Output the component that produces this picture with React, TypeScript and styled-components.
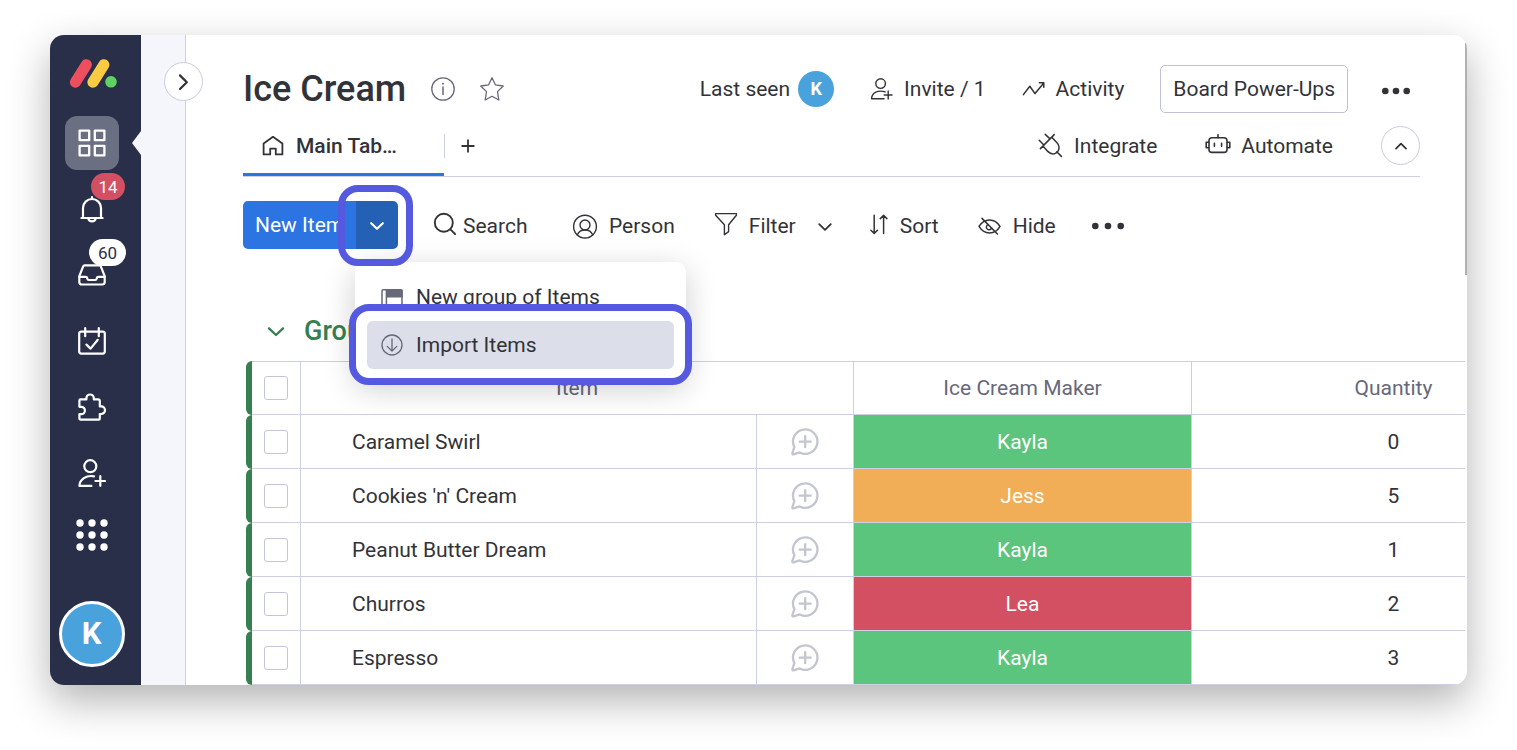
import React from "react";
import styled, { createGlobalStyle, css } from "styled-components";

const color = {
  text: "#323338",
  muted: "#676879",
  line: "#cdd0e1",
  outline: "#c3c6d9",
  navy: "#292f49",
  rail: "#f5f6fb",
  blue: "#2b74e2",
  blueDark: "#2461b4",
  highlight: "#5559df",
  selected: "#dcdee9",
  groupGreen: "#367f50",
  avatar: "#4aa2dd",
  red: "#d25061",
  green: "#5bc47d",
  orange: "#f1ae56",
};

const GlobalStyle = createGlobalStyle`
  * { box-sizing: border-box; }
  body {
    margin: 0;
    background: #fff;
    color: ${color.text};
    font-family: Roboto, "Liberation Sans", sans-serif;
    font-size: 21px;
    line-height: 28px;
  }
  button, input { font: inherit; color: inherit; }
  button { padding: 0; border: 0; background: none; cursor: pointer; }
  svg { display: block; flex: none; }
`;

const Page = styled.div`
  padding: 35px 50px 65px;
`;

const Window = styled.div`
  position: relative;
  display: flex;
  overflow: hidden;
  border-radius: 14px;
  background: #fff;
  box-shadow: 0 16px 42px rgba(0, 0, 0, 0.3);
`;

const ScrollThumb = styled.span`
  position: absolute;
  top: 8px;
  right: 0;
  width: 2px;
  height: 232px;
  background: #b1b1b3;
`;

/* Side navigation */

const Sidebar = styled.nav`
  flex: none;
  display: flex;
  flex-direction: column;
  align-items: center;
  width: 91px;
  padding: 24px 8px 18px 0;
  background: ${color.navy};
  color: #fff;
`;

const LogoLink = styled.a`
  display: block;
  margin-bottom: 22px;
`;

const NavList = styled.ul`
  width: 100%;
  margin: 0;
  padding: 0;
  list-style: none;
`;

const NavItem = styled.li<{ $active?: boolean; $short?: boolean }>`
  position: relative;
  display: flex;
  align-items: center;
  justify-content: center;
  height: ${(p) => (p.$short ? 58 : 66)}px;
  ${(p) =>
    p.$active &&
    css`
      &::after {
        content: "";
        position: absolute;
        right: -8px;
        width: 9px;
        height: 24px;
        background: ${color.rail};
        clip-path: polygon(100% 0, 0 50%, 100% 100%);
      }
    `}
`;

const NavButton = styled.button<{ $active?: boolean }>`
  display: flex;
  align-items: center;
  justify-content: center;
  width: 54px;
  height: 54px;
  border-radius: 12px;
  background: ${(p) => (p.$active ? "#6b6f82" : "transparent")};
`;

const Badge = styled.span<{ $alert?: boolean }>`
  position: absolute;
  left: ${(p) => (p.$alert ? 41 : 39)}px;
  top: -3px;
  display: flex;
  align-items: center;
  justify-content: center;
  min-width: ${(p) => (p.$alert ? 34 : 37)}px;
  height: 27px;
  border-radius: 14px;
  background: ${(p) => (p.$alert ? color.red : "#fff")};
  color: ${(p) => (p.$alert ? "#fff" : color.navy)};
  font-size: 17px;
  line-height: 24px;
`;

const Avatar = styled.span<{ $size: number }>`
  display: flex;
  align-items: center;
  justify-content: center;
  width: ${(p) => p.$size}px;
  height: ${(p) => p.$size}px;
  border-radius: 50%;
  background: ${color.avatar};
  color: #fff;
  font-size: 18px;
  font-weight: 700;
`;

const ProfileButton = styled.button`
  margin-top: auto;
  ${Avatar} {
    border: 3px solid #fff;
    font-size: 31px;
  }
`;

/* Collapsed workspace rail */

const Rail = styled.aside`
  position: relative;
  flex: none;
  width: 45px;
  border-right: 1px solid ${color.line};
  background: ${color.rail};
`;

const RailToggle = styled.button`
  position: absolute;
  top: 27px;
  left: 23px;
  z-index: 1;
  display: flex;
  align-items: center;
  justify-content: center;
  width: 39px;
  height: 39px;
  border: 1px solid #c9cbe2;
  border-radius: 50%;
  background: #fff;
`;

/* Board */

const Board = styled.main`
  flex: 1;
  min-width: 0;
  padding: 30px 2px 0 57px;
`;

const Header = styled.header`
  margin-right: 45px;
`;

const TitleRow = styled.div`
  display: flex;
  align-items: center;
  justify-content: space-between;
  height: 48px;
`;

const Cluster = styled.div<{ $gap: number; $end?: number }>`
  display: flex;
  align-items: center;
  gap: ${(p) => p.$gap}px;
  padding-right: ${(p) => p.$end ?? 0}px;
  white-space: nowrap;
`;

const Tools = styled(Cluster)`
  padding-top: 2px;
`;

const Title = styled.h1`
  margin: 0;
  font-size: 36px;
  font-weight: 500;
  line-height: 44px;
`;

const IconButton = styled.button`
  display: flex;
  align-items: center;
  justify-content: center;
`;

const OptionsButton = styled(IconButton)`
  padding-top: 4px;
`;

const Action = styled.button<{ $gap?: number; $minWidth?: number }>`
  display: flex;
  align-items: center;
  gap: ${(p) => p.$gap ?? 10}px;
  min-width: ${(p) => p.$minWidth ?? 0}px;
  white-space: nowrap;
`;

const OutlineButton = styled.button`
  height: 48px;
  padding: 0 12px;
  border: 1px solid #bfc2d6;
  border-radius: 5px;
  white-space: nowrap;
`;

const TabRow = styled.div`
  display: flex;
  align-items: center;
  justify-content: space-between;
  height: 62px;
  margin-top: 2px;
  border-bottom: 1px solid ${color.line};
`;

const Tabs = styled.div`
  display: flex;
  align-items: center;
  align-self: stretch;
`;

const Tab = styled.button`
  display: flex;
  align-items: center;
  align-self: stretch;
  gap: 11px;
  width: 201px;
  padding: 3px 0 0 18px;
  border-bottom: 3px solid ${color.blue};
  font-weight: 500;
`;

const AddTab = styled.button`
  display: flex;
  align-items: center;
  justify-content: center;
  width: 47px;
  height: 24px;
  border-left: 1px solid ${color.line};
`;

const RoundButton = styled.button`
  display: flex;
  align-items: center;
  justify-content: center;
  width: 39px;
  height: 39px;
  border: 1px solid #c9cbe2;
  border-radius: 50%;
`;

const Toolbar = styled.div`
  display: flex;
  align-items: center;
  gap: 33px;
  margin-top: 24px;
`;

const SplitButton = styled.div`
  position: relative;
  z-index: 2;
  flex: none;
  display: flex;
  height: 48px;
  color: #fff;
`;

const SplitMain = styled.button`
  width: 113px;
  padding-left: 12px;
  border-radius: 5px 0 0 5px;
  background: ${color.blue};
  text-align: left;
  white-space: nowrap;
`;

const SplitMore = styled.button`
  position: relative;
  z-index: 1;
  display: flex;
  align-items: center;
  justify-content: center;
  width: 42px;
  border-radius: 0 5px 5px 0;
  background: ${color.blueDark};
  &::after {
    content: "";
    position: absolute;
    inset: -16px -15px -17px -18px;
    border: 7px solid ${color.highlight};
    border-radius: 20px;
  }
`;

const Menu = styled.ul`
  position: absolute;
  top: 61px;
  left: 112px;
  width: 331px;
  margin: 0;
  padding: 11px 12px;
  border-radius: 10px;
  background: #fff;
  box-shadow: 0 8px 32px rgba(0, 0, 0, 0.2);
  color: ${color.text};
  list-style: none;
`;

const MenuItem = styled.li<{ $highlighted?: boolean }>`
  position: relative;
  ${(p) =>
    p.$highlighted &&
    css`
      z-index: 1;
      &::before {
        content: "";
        position: absolute;
        z-index: -1;
        inset: -17px -18px -16px;
        border: 7px solid ${color.highlight};
        border-radius: 20px;
        background: #fff;
      }
    `}
`;

const MenuButton = styled.button<{ $selected?: boolean }>`
  display: flex;
  align-items: center;
  gap: 12px;
  width: 100%;
  height: 48px;
  padding-left: 13px;
  border-radius: 6px;
  background: ${(p) => (p.$selected ? color.selected : "transparent")};
`;

/* Group and table */

const GroupHeader = styled.div`
  display: flex;
  align-items: center;
  gap: 16px;
  height: 60px;
  margin-top: 52px;
  padding-left: 21px;
  color: ${color.groupGreen};
`;

const GroupTitle = styled.h2`
  margin: 0;
  font-size: 27px;
  font-weight: 500;
  line-height: 32px;
`;

const TableScroller = styled.div`
  margin-left: 3px;
  overflow: hidden;
`;

const Table = styled.table`
  width: 100%;
  min-width: 1350px;
  table-layout: fixed;
  border-collapse: separate;
  border-spacing: 0;
`;

const Col = styled.col<{ $width?: number }>`
  width: ${(p) => (p.$width ? `${p.$width}px` : "auto")};
`;

const cell = css`
  height: 54px;
  padding: 0;
  border: solid ${color.line};
  border-width: 0 1px 1px 0;
  font-weight: 400;
  text-align: center;
`;

const HeadCell = styled.th`
  ${cell}
  border-top-width: 1px;
  color: ${color.muted};
`;

const Cell = styled.td`
  ${cell}
`;

const NameCell = styled.td`
  ${cell}
  padding-left: 51px;
  text-align: left;
`;

const StatusCell = styled.td<{ $fill: string }>`
  ${cell}
  background: ${(p) => p.$fill};
  background-clip: padding-box;
  color: #fff;
`;

const GroupBar = styled.td`
  padding: 0;
  border-radius: 6px 0 0 6px;
  background: ${color.groupGreen};
`;

const Checkbox = styled.input`
  appearance: none;
  display: block;
  width: 24px;
  height: 24px;
  margin: 0 auto;
  border: 1px solid ${color.outline};
  border-radius: 3px;
  background: #fff;
`;

const UpdateButton = styled.button`
  display: block;
  margin: 0 auto;
  color: #c4c6cf;
`;

/* Icons */

type IconProps = {
  w: number;
  h?: number;
  sw?: number;
  children: React.ReactNode;
};

const Icon = ({ w, h = w, sw = 1.5, children }: IconProps) => (
  <svg
    width={w}
    height={h}
    viewBox={`0 0 ${w} ${h}`}
    fill="none"
    stroke="currentColor"
    strokeWidth={sw}
    strokeLinecap="round"
    strokeLinejoin="round"
    aria-hidden="true"
  >
    {children}
  </svg>
);

const Logo = () => (
  <svg width="51" height="29" viewBox="-4 0 51 29" aria-hidden="true">
    <g strokeWidth="11" strokeLinecap="round">
      <path d="M5.4 23.2L16.4 5.7" stroke="#ee4f5e" />
      <path d="M22.9 23.2L33.9 5.7" stroke="#f8cb43" />
    </g>
    <circle cx="41" cy="22.8" r="5.8" fill="#5fd35f" />
  </svg>
);

const GridIcon = () => (
  <Icon w={28} sw={2.3}>
    <path d="M1.6 1.6h9.6v9.6H1.6zM16.8 1.6h9.6v9.6h-9.6zM1.6 16.8h9.6v9.6H1.6zM16.8 16.8h9.6v9.6h-9.6z" />
  </Icon>
);

const BellIcon = () => (
  <Icon w={28} sw={2.2}>
    <path d="M14 2v2M3.4 23h21.2M5 22.8V13a9 9 0 0 1 18 0v9.8M10.2 23.6a3.9 3.6 0 0 0 7.6 0" />
  </Icon>
);

const InboxIcon = () => (
  <Icon w={28} h={22} sw={2.2}>
    <path d="M6.6 1.3h14.8q1 0 1.4 1l3.9 9.9v5.8q0 2.5-2.5 2.5H3.8q-2.5 0-2.5-2.5v-5.8l3.9-9.9q.4-1 1.4-1z" />
    <path d="M1.5 12.8h6.4q1 0 1.2 1l.2.9q.3 1.3 1.5 1.3h6.4q1.2 0 1.5-1.3l.2-.9q.2-1 1.2-1h6.4" />
  </Icon>
);

const CalendarIcon = () => (
  <Icon w={28} sw={2.2}>
    <rect x="1.2" y="4.6" width="25.6" height="22" rx="2" />
    <path d="M7.2 1.2v8M20.8 1.2v8M8.4 17.6l4.2 4 7.2-8.8" />
  </Icon>
);

const PuzzleIcon = () => (
  <Icon w={28} sw={2.2}>
    <path d="M2.6 6.4H8.4V5.2a3.7 3.7 0 0 1 7.4 0V6.4h4.4q1.6 0 1.6 1.6v5.4h1.4a3.8 3.8 0 0 1 0 7.6h-1.4v4.2q0 1.4-1.4 1.4H2.6q-1.2 0-1.2-1.2v-4.2h1.8a3.7 3.7 0 0 0 0-7.4H1.4V7.6q0-1.2 1.2-1.2z" />
  </Icon>
);

const NavInviteIcon = () => (
  <Icon w={28} sw={2.2}>
    <circle cx="12.3" cy="7.2" r="6" />
    <path d="M16 17.3C8.4 15.8 1.5 20.6 1.4 26.9h12M22.3 17.2v9.6M17.4 22h9.6" />
  </Icon>
);

const AppsIcon = () => (
  <svg width="32" height="32" viewBox="0 0 32 32" fill="currentColor" aria-hidden="true">
    {[4, 16, 28].map((y) => [4, 16, 28].map((x) => <circle key={`${x}-${y}`} cx={x} cy={y} r="3.7" />))}
  </svg>
);

const ChevronRight = () => (
  <Icon w={20} sw={2.2}>
    <path d="M6 3.4L12.8 10.2L6 17" />
  </Icon>
);

const ChevronDown = ({ sw = 1.8 }: { sw?: number }) => (
  <Icon w={18} sw={sw}>
    <path d="M3.2 7.2L9 12.8L14.8 7.2" />
  </Icon>
);

const GroupChevron = () => (
  <Icon w={24} sw={2.3}>
    <path d="M5 9.4L12 16L19 9.4" />
  </Icon>
);

const ChevronUp = () => (
  <Icon w={18} sw={1.8}>
    <path d="M4 11.6L9 6.6L14 11.6" />
  </Icon>
);

const InfoIcon = () => (
  <Icon w={24} sw={1.3}>
    <circle cx="12" cy="12" r="11.2" />
    <path d="M12 10v7.6" strokeWidth="1.5" />
    <circle cx="12" cy="6.8" r="1" fill="currentColor" stroke="none" />
  </Icon>
);

const StarIcon = () => (
  <Icon w={24} sw={1.3}>
    <path d="M12 0.7l3.4 7.1 7.8 1.2-5.7 5.6 1.3 8.4-6.8-3.7-6.8 3.7 1.3-8.4L.8 9l7.8-1.2z" />
  </Icon>
);

const InviteIcon = () => (
  <Icon w={24} sw={1.4}>
    <circle cx="10.6" cy="6.6" r="4.8" />
    <path d="M15.2 14.9C8.2 12.8 1.7 15.6 1.6 21.8h12.4M18.2 14v8M14.2 18h7.8" />
  </Icon>
);

const ActivityIcon = () => (
  <Icon w={24} sw={1.5}>
    <path d="M1.4 17.6L7.8 9.2L13 16.6L21.4 6.4M17.4 5.8L21.8 5.8L21.8 10.2" />
  </Icon>
);

const Dots = ({ w, r }: { w: number; r: number }) => (
  <svg width={w} height="12" viewBox={`0 0 ${w} 12`} fill="currentColor" aria-hidden="true">
    <circle cx={r} cy="6" r={r} />
    <circle cx={w / 2} cy="6" r={r} />
    <circle cx={w - r} cy="6" r={r} />
  </svg>
);

const HomeIcon = () => (
  <Icon w={24} sw={1.8}>
    <path d="M2.6 9.4L12 2.8L21.4 9.4V20.4H14.8V14.6H9.2V20.4H2.6z" />
  </Icon>
);

const PlusIcon = () => (
  <Icon w={14} sw={1.8}>
    <path d="M7 1.2v11.6M1.2 7h11.6" />
  </Icon>
);

const IntegrateIcon = () => (
  <Icon w={26} sw={1.5}>
    <path d="M2.4 15.6L16.2 1.6M1.2 7.2L5.6 11.8M7.2 1.4L11.8 5.6M5 13L9.8 18.4Q13.4 22 17 20.6Q21.4 18.8 21 13.8Q20.8 11.6 19 9.8L13.8 4.2M18.8 18.8L23.4 23.4" />
  </Icon>
);

const AutomateIcon = () => (
  <Icon w={26} h={24} sw={1.6}>
    <rect x="4" y="3.8" width="18" height="14.6" rx="3" />
    <path d="M13 .8v3M9.4 9.2v3M16.6 9.2v3M3.8 8.2H1.2v5.6h2.6M22.2 8.2h2.6v5.6h-2.6" />
  </Icon>
);

const SearchIcon = () => (
  <Icon w={28} sw={1.9}>
    <circle cx="12.8" cy="10.8" r="9" />
    <path d="M19.4 17.4l4.8 4.8" />
  </Icon>
);

const PersonIcon = () => (
  <Icon w={28} sw={1.4}>
    <circle cx="14" cy="14.6" r="11.4" />
    <circle cx="14" cy="13" r="5" />
    <path d="M6.4 22.8C7.8 19.2 11 18 14 18s6.2 1.2 7.6 4.8" />
  </Icon>
);

const FilterIcon = () => (
  <Icon w={28} sw={1.4}>
    <path d="M4.6 1.6H25.4V3.2L17.6 12.8V19.6L13.4 22.8V12.8L4.6 3.2z" />
  </Icon>
);

const SortIcon = () => (
  <Icon w={20} h={28} sw={1.5}>
    <path d="M4.2 3.2V21.4M.9 18.2L4.2 21.4L7.5 18.2M13.6 21.4V3.4M10.3 6.6L13.6 3.4L16.9 6.6" />
  </Icon>
);

const HideIcon = () => (
  <Icon w={28} sw={1.5}>
    <path d="M4 14.4C7 9.6 10.6 8 14.6 8s7.6 1.8 10.4 6.4C22.2 19.4 18.6 21 14.6 21S7 19.2 4 14.4zM7 6.4L22.4 22" />
    <path d="M13 12.6a2.7 2.7 0 1 0 3.6 3.4" />
  </Icon>
);

const NewGroupIcon = () => (
  <Icon w={24} sw={1.5}>
    <rect x="2" y="4.8" width="20" height="16.4" rx="1" />
    <path d="M6.4 4.8v16.4" />
    <path d="M7 5.4h15v6.4H7z" fill="currentColor" />
  </Icon>
);

const ImportIcon = () => (
  <Icon w={24} sw={1.3}>
    <circle cx="12" cy="12" r="10" />
    <path d="M12 5.8v12M7.2 13.4L12 18L16.8 13.4" />
  </Icon>
);

const UpdateIcon = () => (
  <Icon w={30} h={28} sw={2.3}>
    <path d="M9.6 24.4A12.2 12.2 0 1 0 4.4 19.2L2.4 25Q2 26.6 3.6 26.3zM15.2 8.2v11M9.7 13.7h11" />
  </Icon>
);

const MutedIcon = styled.span`
  color: ${color.muted};
`;

const MutedButton = styled(IconButton)`
  color: ${color.muted};
`;

const makers = {
  Kayla: color.green,
  Jess: color.orange,
  Lea: color.red,
};

type Row = { name: string; maker: keyof typeof makers; quantity: number };

const rows: Row[] = [
  { name: "Caramel Swirl", maker: "Kayla", quantity: 0 },
  { name: "Cookies 'n' Cream", maker: "Jess", quantity: 5 },
  { name: "Peanut Butter Dream", maker: "Kayla", quantity: 1 },
  { name: "Churros", maker: "Lea", quantity: 2 },
  { name: "Espresso", maker: "Kayla", quantity: 3 },
];

const SideNav = () => (
  <Sidebar aria-label="Main">
    <LogoLink href="#" aria-label="Home">
      <Logo />
    </LogoLink>
    <NavList>
      <NavItem $active>
        <NavButton $active aria-label="Boards"><GridIcon /></NavButton>
      </NavItem>
      <NavItem>
        <NavButton aria-label="Notifications"><BellIcon /></NavButton>
        <Badge $alert>14</Badge>
      </NavItem>
      <NavItem>
        <NavButton aria-label="Inbox"><InboxIcon /></NavButton>
        <Badge>60</Badge>
      </NavItem>
      <NavItem>
        <NavButton aria-label="My work"><CalendarIcon /></NavButton>
      </NavItem>
      <NavItem>
        <NavButton aria-label="Apps"><PuzzleIcon /></NavButton>
      </NavItem>
      <NavItem>
        <NavButton aria-label="Invite members"><NavInviteIcon /></NavButton>
      </NavItem>
      <NavItem $short>
        <NavButton aria-label="Products"><AppsIcon /></NavButton>
      </NavItem>
    </NavList>
    <ProfileButton aria-label="Profile">
      <Avatar $size={66}>K</Avatar>
    </ProfileButton>
  </Sidebar>
);

const BoardHeader = () => (
  <Header>
    <TitleRow>
      <Cluster $gap={25}>
        <Title>Ice Cream</Title>
        <MutedButton aria-label="Board info"><InfoIcon /></MutedButton>
        <MutedButton aria-label="Add to favorites"><StarIcon /></MutedButton>
      </Cluster>
      <Cluster $gap={34} $end={10}>
        <Cluster $gap={36}>
          <Action $gap={8}>
            Last seen
            <Avatar $size={36}>K</Avatar>
          </Action>
          <Action><InviteIcon />Invite / 1</Action>
          <Action><ActivityIcon />Activity</Action>
          <OutlineButton>Board Power-Ups</OutlineButton>
        </Cluster>
        <OptionsButton aria-label="Board options"><Dots w={28} r={3.3} /></OptionsButton>
      </Cluster>
    </TitleRow>
    <TabRow>
      <Tabs>
        <Tab><HomeIcon />Main Tab…</Tab>
        <AddTab aria-label="Add view"><PlusIcon /></AddTab>
      </Tabs>
      <Cluster $gap={48}>
        <Action><IntegrateIcon />Integrate</Action>
        <Action><AutomateIcon />Automate</Action>
        <RoundButton aria-label="Collapse header"><ChevronUp /></RoundButton>
      </Cluster>
    </TabRow>
  </Header>
);

const BoardToolbar = () => (
  <Toolbar>
    <SplitButton>
      <SplitMain>New Item</SplitMain>
      <SplitMore aria-label="More item options"><ChevronDown sw={2.2} /></SplitMore>
      <Menu>
        <MenuItem>
          <MenuButton><MutedIcon><NewGroupIcon /></MutedIcon>New group of Items</MenuButton>
        </MenuItem>
        <MenuItem $highlighted>
          <MenuButton $selected><MutedIcon><ImportIcon /></MutedIcon>Import Items</MenuButton>
        </MenuItem>
      </Menu>
    </SplitButton>
    <Tools $gap={36}>
      <Action $gap={4} $minWidth={104}><SearchIcon />Search</Action>
      <Action><PersonIcon />Person</Action>
      <Cluster $gap={20}>
        <Action><FilterIcon />Filter</Action>
        <IconButton aria-label="Filter options"><ChevronDown /></IconButton>
      </Cluster>
      <Action><SortIcon />Sort</Action>
      <Action><HideIcon />Hide</Action>
      <IconButton aria-label="More tools"><Dots w={32} r={3.3} /></IconButton>
    </Tools>
  </Toolbar>
);

const ItemsTable = () => (
  <TableScroller>
    <Table>
      <colgroup>
        <Col $width={6} />
        <Col $width={49} />
        <Col />
        <Col $width={97} />
        <Col $width={338} />
        <Col $width={404} />
      </colgroup>
      <thead>
        <tr>
          <GroupBar />
          <HeadCell><Checkbox type="checkbox" aria-label="Select all items" /></HeadCell>
          <HeadCell colSpan={2}>Item</HeadCell>
          <HeadCell>Ice Cream Maker</HeadCell>
          <HeadCell>Quantity</HeadCell>
        </tr>
      </thead>
      <tbody>
        {rows.map((row) => (
          <tr key={row.name}>
            <GroupBar />
            <Cell><Checkbox type="checkbox" aria-label={`Select ${row.name}`} /></Cell>
            <NameCell>{row.name}</NameCell>
            <Cell>
              <UpdateButton aria-label={`Add update to ${row.name}`}><UpdateIcon /></UpdateButton>
            </Cell>
            <StatusCell $fill={makers[row.maker]}>{row.maker}</StatusCell>
            <Cell>{row.quantity}</Cell>
          </tr>
        ))}
      </tbody>
    </Table>
  </TableScroller>
);

export default function App() {
  return (
    <>
      <GlobalStyle />
      <Page>
        <Window>
          <SideNav />
          <Rail>
            <RailToggle aria-label="Open workspace panel"><ChevronRight /></RailToggle>
          </Rail>
          <Board>
            <BoardHeader />
            <BoardToolbar />
            <GroupHeader>
              <IconButton aria-label="Collapse group"><GroupChevron /></IconButton>
              <GroupTitle>Group</GroupTitle>
            </GroupHeader>
            <ItemsTable />
          </Board>
          <ScrollThumb />
        </Window>
      </Page>
    </>
  );
}
